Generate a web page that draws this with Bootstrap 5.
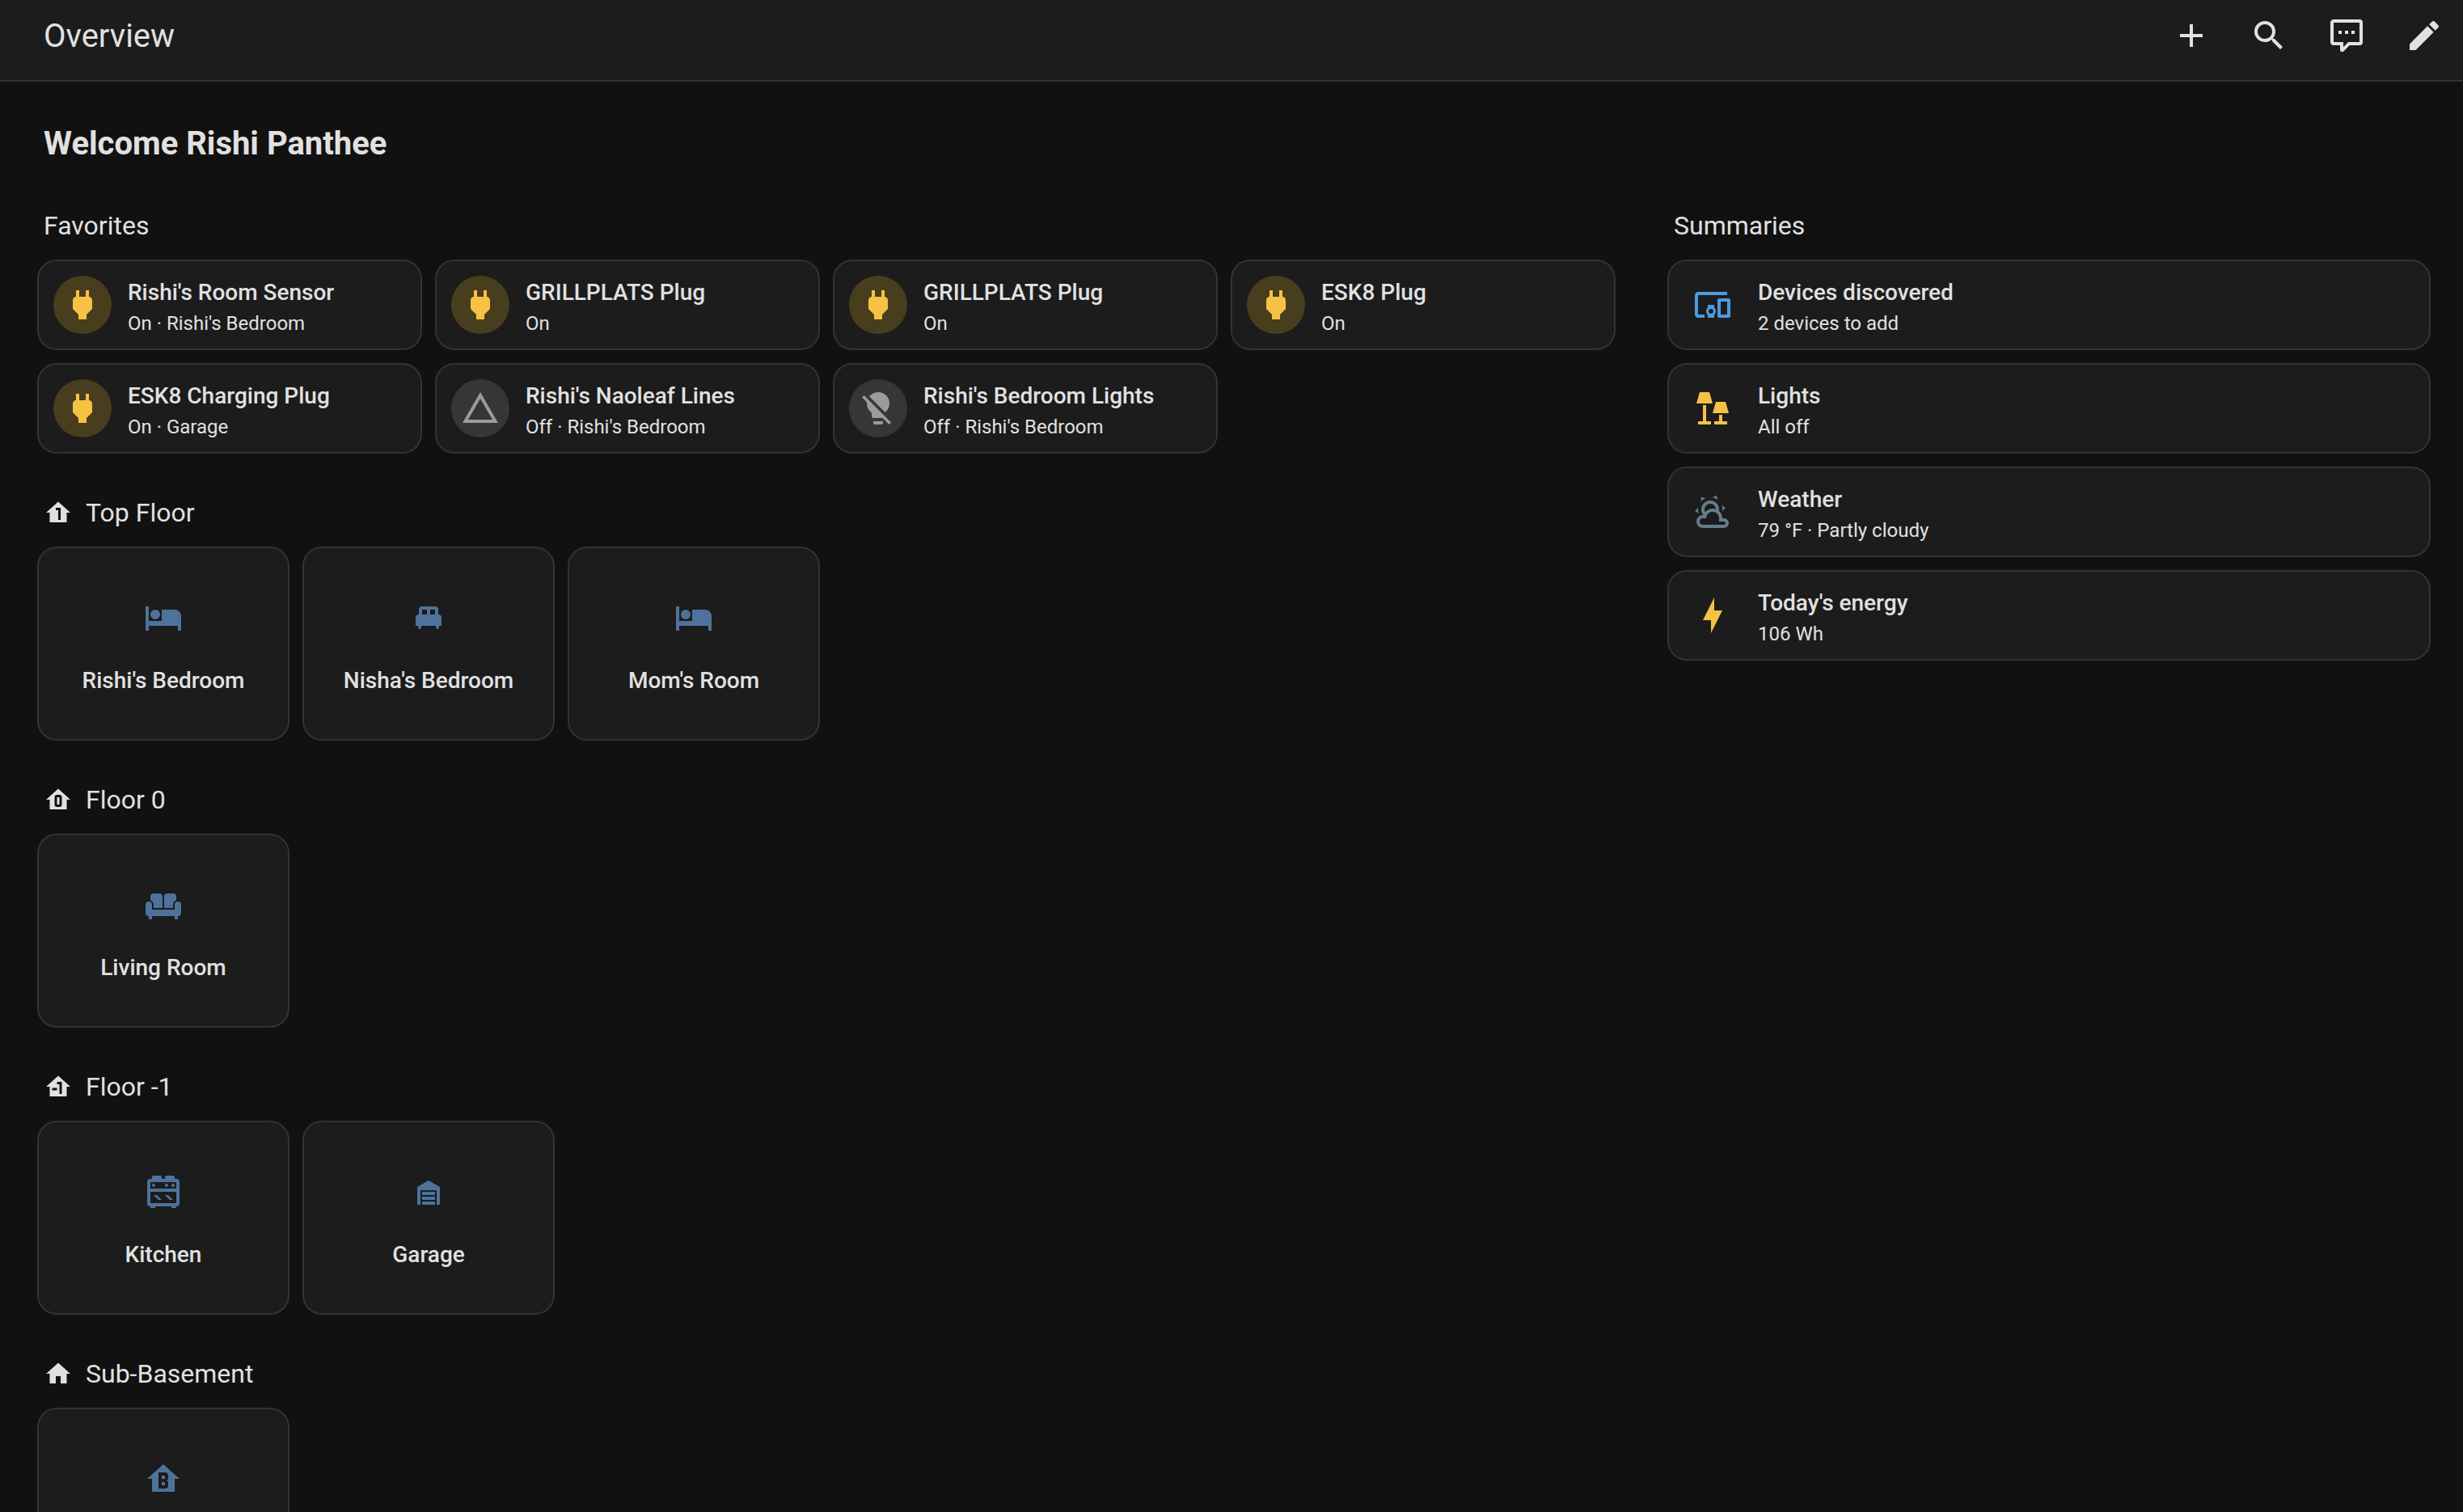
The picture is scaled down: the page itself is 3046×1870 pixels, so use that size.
<!DOCTYPE html>
<html lang="en" data-bs-theme="dark">
<head>
<meta charset="utf-8">
<meta name="viewport" content="width=device-width, initial-scale=1">
<title>Overview</title>
<link href="https://cdn.jsdelivr.net/npm/bootstrap@5.3.0/dist/css/bootstrap.min.css" rel="stylesheet">
<style>
  body { background: #111; color: #e1e1e1; font-family: Roboto, "Noto Sans", sans-serif; font-size: 28px; }
  h1, h2, h3 { color: #e1e1e1; }
  svg { fill: currentColor; fill-rule: evenodd; display: block; width: 48px; height: 48px; flex: none; }
  .topbar { background: #1c1c1c; border-bottom: 2px solid #333; padding: 0 0 11px 54px; }
  .topbar h1 { font-size: 40px; line-height: 48px; font-weight: 400; padding-top: 2px; }
  .tool-btn { width: 96px; height: 88px; color: #e1e1e1; border: 0; border-radius: 0; }
  .view { padding: 53px 40px 0 46px; }
  .welcome { font-size: 40px; line-height: 48px; font-weight: 700; padding: 0 8px; margin-bottom: 53px; }
  .sections { display: grid; grid-template-columns: repeat(3, minmax(0, 1fr)); gap: 64px; }
  .areas { grid-column: span 2; }
  .section-title { font-size: 32px; line-height: 48px; font-weight: 400; padding: 0 8px; margin: 0 0 18px; gap: 16px; }
  .section-title svg { width: 36px; height: 36px; }
  .floor { margin-top: 49px; }
  .fav-grid, .room-grid { display: grid; gap: 16px; }
  .fav-grid { grid-template-columns: repeat(4, minmax(0, 1fr)); }
  .room-grid { grid-template-columns: repeat(6, minmax(0, 1fr)); }
  .tile, .room { background: #1c1c1c; border: 2px solid #333; border-radius: 24px; color: #e1e1e1; }
  .tile { min-height: 112px; padding: 0 18px; gap: 20px; }
  .tile-icon { width: 72px; height: 72px; color: #f6c244; }
  .tile-icon.on { background: #483d1d; }
  .tile-icon.off { background: #363636; color: #9b9b9b; }
  .tile-text { padding-top: 6px; }
  .tile-name, .room-name { font-size: 28px; line-height: 40px; font-weight: 500; }
  .tile-state { font-size: 24px; line-height: 36px; }
  .room { height: 240px; padding: 50px 16px; gap: 22px; }
  .room-icon { width: 72px; height: 72px; color: #4e729c; }
  .tile-icon.blue { color: #4a9be2; }
  .tile-icon.slate { color: #657d8a; }
</style>
</head>
<body>
<svg class="d-none" aria-hidden="true">
  <symbol id="plug" viewBox="0 0 24 24"><path d="M16,7V3H14V7H10V3H8V7C7,7 6,8 6,9V14.5L9.5,18V21H14.5V18L18,14.5V9C18,8 17,7 16,7Z"/></symbol>
  <symbol id="bed" viewBox="0 0 24 24"><path d="M19,7H11V14H3V5H1V20H3V17H21V20H23V11A4,4 0 0,0 19,7M7,13A3,3 0 0,0 10,10A3,3 0 0,0 7,7A3,3 0 0,0 4,10A3,3 0 0,0 7,13Z"/></symbol>
</svg>
<div class="vh-100 d-flex flex-column overflow-hidden">
  <header class="topbar d-flex align-items-center">
    <h1 class="mb-0 me-auto">Overview</h1>
    <button type="button" class="btn tool-btn p-0 d-flex align-items-center justify-content-center" aria-label="Add"><svg viewBox="0 0 24 24"><path d="M19,13H13V19H11V13H5V11H11V5H13V11H19V13Z"/></svg></button>
    <button type="button" class="btn tool-btn p-0 d-flex align-items-center justify-content-center" aria-label="Search"><svg viewBox="0 0 24 24"><path d="M9.5,3A6.5,6.5 0 0,1 16,9.5C16,11.11 15.41,12.59 14.44,13.73L14.71,14H15.5L20.5,19L19,20.5L14,15.5V14.71L13.73,14.44C12.59,15.41 11.11,16 9.5,16A6.5,6.5 0 0,1 3,9.5A6.5,6.5 0 0,1 9.5,3M9.5,5C7,5 5,7 5,9.5C5,12 7,14 9.5,14C12,14 14,12 14,9.5C14,7 12,5 9.5,5Z"/></svg></button>
    <button type="button" class="btn tool-btn p-0 d-flex align-items-center justify-content-center" aria-label="Assist"><svg viewBox="0 0 24 24"><path d="M9,22A1,1 0 0,1 8,21V18H4A2,2 0 0,1 2,16V4C2,2.89 2.9,2 4,2H20A2,2 0 0,1 22,4V16A2,2 0 0,1 20,18H13.9L10.2,21.71C10,21.9 9.75,22 9.5,22H9M10,16V19.08L13.08,16H20V4H4V16H10M17,11H15V9H17V11M13,11H11V9H13V11M9,11H7V9H9V11Z"/></svg></button>
    <button type="button" class="btn tool-btn p-0 d-flex align-items-center justify-content-center" aria-label="Edit"><svg viewBox="0 0 24 24"><path d="M20.71,7.04C21.1,6.65 21.1,6 20.71,5.63L18.37,3.29C18,2.9 17.35,2.9 16.96,3.29L15.12,5.12L18.87,8.87M3,17.25V21H6.75L17.81,9.93L14.06,6.18L3,17.25Z"/></svg></button>
  </header>

  <main class="view flex-grow-1 overflow-hidden">
    <h2 class="welcome">Welcome Rishi Panthee</h2>
    <div class="sections">
      <div class="areas">
        <section>
          <h3 class="section-title">Favorites</h3>
          <div class="fav-grid">
            <button type="button" class="tile d-flex align-items-center text-start">
              <span class="tile-icon on rounded-circle d-flex align-items-center justify-content-center"><svg><use href="#plug"/></svg></span>
              <span class="tile-text d-flex flex-column"><span class="tile-name">Rishi's Room Sensor</span><span class="tile-state">On · Rishi's Bedroom</span></span>
            </button>
            <button type="button" class="tile d-flex align-items-center text-start">
              <span class="tile-icon on rounded-circle d-flex align-items-center justify-content-center"><svg><use href="#plug"/></svg></span>
              <span class="tile-text d-flex flex-column"><span class="tile-name">GRILLPLATS Plug</span><span class="tile-state">On</span></span>
            </button>
            <button type="button" class="tile d-flex align-items-center text-start">
              <span class="tile-icon on rounded-circle d-flex align-items-center justify-content-center"><svg><use href="#plug"/></svg></span>
              <span class="tile-text d-flex flex-column"><span class="tile-name">GRILLPLATS Plug</span><span class="tile-state">On</span></span>
            </button>
            <button type="button" class="tile d-flex align-items-center text-start">
              <span class="tile-icon on rounded-circle d-flex align-items-center justify-content-center"><svg><use href="#plug"/></svg></span>
              <span class="tile-text d-flex flex-column"><span class="tile-name">ESK8 Plug</span><span class="tile-state">On</span></span>
            </button>
            <button type="button" class="tile d-flex align-items-center text-start">
              <span class="tile-icon on rounded-circle d-flex align-items-center justify-content-center"><svg><use href="#plug"/></svg></span>
              <span class="tile-text d-flex flex-column"><span class="tile-name">ESK8 Charging Plug</span><span class="tile-state">On · Garage</span></span>
            </button>
            <button type="button" class="tile d-flex align-items-center text-start">
              <span class="tile-icon off rounded-circle d-flex align-items-center justify-content-center"><svg viewBox="0 0 24 24"><path d="M12,2L1,21H23M12,6L19.53,19H4.47"/></svg></span>
              <span class="tile-text d-flex flex-column"><span class="tile-name">Rishi's Naoleaf Lines</span><span class="tile-state">Off · Rishi's Bedroom</span></span>
            </button>
            <button type="button" class="tile d-flex align-items-center text-start">
              <span class="tile-icon off rounded-circle d-flex align-items-center justify-content-center"><svg viewBox="0 0 24 24"><path d="M12,2C9.76,2 7.78,3.05 6.5,4.68L16.31,14.5C17.94,13.21 19,11.24 19,9A7,7 0 0,0 12,2M3.28,4L2,5.27L5.04,8.3C5,8.53 5,8.76 5,9C5,11.38 6.19,13.47 8,14.74V17A1,1 0 0,0 9,18H14.73L18.73,22L20,20.72L3.28,4M9,20V21A1,1 0 0,0 10,22H14A1,1 0 0,0 15,21V20H9Z"/></svg></span>
              <span class="tile-text d-flex flex-column"><span class="tile-name">Rishi's Bedroom Lights</span><span class="tile-state">Off · Rishi's Bedroom</span></span>
            </button>
          </div>
        </section>

        <section class="floor">
          <h3 class="section-title d-flex align-items-center"><svg viewBox="0 0 24 24"><path d="M12,3L2,12H5V20H19V12H22L12,3M10,8H14V18H12V10H10V8Z"/></svg>Top Floor</h3>
          <div class="room-grid">
            <a href="#" class="room d-flex flex-column align-items-center text-decoration-none">
              <span class="room-icon d-flex align-items-center justify-content-center"><svg><use href="#bed"/></svg></span>
              <span class="room-name">Rishi's Bedroom</span>
            </a>
            <a href="#" class="room d-flex flex-column align-items-center text-decoration-none">
              <span class="room-icon d-flex align-items-center justify-content-center"><svg viewBox="0 0 24 24"><path d="M20 12A2 2 0 0 0 18 10V7A2 2 0 0 0 16 5H8A2 2 0 0 0 6 7V10A2 2 0 0 0 4 12V17H5.33L6 19H7L7.67 17H16.33L17 19H18L18.67 17H20M11 10H8V7H11M16 10H13V7H16Z"/></svg></span>
              <span class="room-name">Nisha's Bedroom</span>
            </a>
            <a href="#" class="room d-flex flex-column align-items-center text-decoration-none">
              <span class="room-icon d-flex align-items-center justify-content-center"><svg><use href="#bed"/></svg></span>
              <span class="room-name">Mom's Room</span>
            </a>
          </div>
        </section>

        <section class="floor">
          <h3 class="section-title d-flex align-items-center"><svg viewBox="0 0 24 24"><path d="M12,3L2,12H5V20H19V12H22L12,3M11,8H13A2,2 0 0,1 15,10V16A2,2 0 0,1 13,18H11A2,2 0 0,1 9,16V10A2,2 0 0,1 11,8M11,10V16H13V10H11Z"/></svg>Floor 0</h3>
          <div class="room-grid">
            <a href="#" class="room d-flex flex-column align-items-center text-decoration-none">
              <span class="room-icon d-flex align-items-center justify-content-center"><svg viewBox="0 0 24 24"><path d="M6 5H9.5A2 2 0 0 1 11.500 7V14H6V12A3 3 0 0 0 4 9.200V7A2 2 0 0 1 6 5ZM14.500 5H18A2 2 0 0 1 20 7V9.200A3 3 0 0 0 18 12V14H12.500V7A2 2 0 0 1 14.500 5ZM3 10A2 2 0 0 1 5 12V15H19V12A2 2 0 0 1 23 12V17A2 2 0 0 1 21 19V21H19V19H5V21H3V19A2 2 0 0 1 1 17V12A2 2 0 0 1 3 10Z"/></svg></span>
              <span class="room-name">Living Room</span>
            </a>
          </div>
        </section>

        <section class="floor">
          <h3 class="section-title d-flex align-items-center"><svg viewBox="0 0 24 24"><path d="M12,3L2,12H5V20H19V12H22L12,3M11,15H7V13H11V15M15,18H13V10H11V8H15V18Z"/></svg>Floor -1</h3>
          <div class="room-grid">
            <a href="#" class="room d-flex flex-column align-items-center text-decoration-none">
              <span class="room-icon d-flex align-items-center justify-content-center"><svg viewBox="0 0 24 24"><path d="M6,14H8L11,17H9L6,14M4,4H5V3A1,1 0 0,1 6,2H10A1,1 0 0,1 11,3V4H13V3A1,1 0 0,1 14,2H18A1,1 0 0,1 19,3V4H20A2,2 0 0,1 22,6V19A2,2 0 0,1 20,21V22H17V21H7V22H4V21A2,2 0 0,1 2,19V6A2,2 0 0,1 4,4M18,7A1,1 0 0,1 19,8A1,1 0 0,1 18,9A1,1 0 0,1 17,8A1,1 0 0,1 18,7M14,7A1,1 0 0,1 15,8A1,1 0 0,1 14,9A1,1 0 0,1 13,8A1,1 0 0,1 14,7M20,6H4V10H20V6M4,19H20V12H4V19M6,7A1,1 0 0,1 7,8A1,1 0 0,1 6,9A1,1 0 0,1 5,8A1,1 0 0,1 6,7M13,14H15L18,17H16L13,14Z"/></svg></span>
              <span class="room-name">Kitchen</span>
            </a>
            <a href="#" class="room d-flex flex-column align-items-center text-decoration-none">
              <span class="room-icon d-flex align-items-center justify-content-center"><svg viewBox="0 0 24 24"><path d="M19,20H17V11H7V20H5V9L12,5L19,9V20M8,12H16V14H8V12M8,15H16V17H8V15M16,18V20H8V18H16Z"/></svg></span>
              <span class="room-name">Garage</span>
            </a>
          </div>
        </section>

        <section class="floor">
          <h3 class="section-title d-flex align-items-center"><svg viewBox="0 0 24 24"><path d="M10,20V14H14V20H19V12H22L12,3L2,12H5V20H10Z"/></svg>Sub-Basement</h3>
          <div class="room-grid">
            <a href="#" class="room d-flex flex-column align-items-center text-decoration-none">
              <span class="room-icon d-flex align-items-center justify-content-center"><svg viewBox="0 0 24 24"><path d="M12,3L2,12H5V20H19V12H22L12,3M9,8H13A2,2 0 0,1 15,10V11.5A1.5,1.5 0 0,1 13.5,13A1.5,1.5 0 0,1 15,14.5V16A2,2 0 0,1 13,18H9V8M11,10V12H13V10H11M11,14V16H13V14H11Z"/></svg></span>
            </a>
          </div>
        </section>
      </div>

      <section>
        <h3 class="section-title">Summaries</h3>
        <div class="d-grid gap-3">
          <button type="button" class="tile d-flex align-items-center text-start">
            <span class="tile-icon blue d-flex align-items-center justify-content-center"><svg viewBox="0 0 24 24"><path d="M3 6h18V4H3c-1.100 0-2 .9-2 2v12c0 1.100.9 2 2 2h4v-2H3V6zm10 6H9v1.780c-.61.55-1 1.330-1 2.220s.39 1.670 1 2.220V20h4v-1.780c.61-.55 1-1.340 1-2.220s-.39-1.670-1-2.220V12zm-2 5.500c-.83 0-1.500-.67-1.500-1.500s.67-1.500 1.500-1.500 1.500.67 1.500 1.500-.67 1.500-1.500 1.500zM22 8h-6c-.5 0-1 .5-1 1v10c0 .5.5 1 1 1h6c.5 0 1-.5 1-1V9c0-.5-.5-1-1-1zm-1 10h-4v-8h4v8z"/></svg></span>
            <span class="tile-text d-flex flex-column"><span class="tile-name">Devices discovered</span><span class="tile-state">2 devices to add</span></span>
          </button>
          <button type="button" class="tile d-flex align-items-center text-start">
            <span class="tile-icon d-flex align-items-center justify-content-center"><svg viewBox="0 0 24 24"><path d="M4 2H10L12 9H2ZM6 10H8V20H11V22H3V20H6ZM14 8H20L22 15H12ZM16 16H18V20H21V22H13V20H16Z"/></svg></span>
            <span class="tile-text d-flex flex-column"><span class="tile-name">Lights</span><span class="tile-state">All off</span></span>
          </button>
          <button type="button" class="tile d-flex align-items-center text-start">
            <span class="tile-icon slate d-flex align-items-center justify-content-center"><svg viewBox="0 0 24 24"><path d="M12.74,5.47C15.1,6.5 16.35,9.03 15.92,11.46C17.19,12.56 18,14.19 18,16V16.17C18.31,16.06 18.65,16 19,16A3,3 0 0,1 22,19A3,3 0 0,1 19,22H6A4,4 0 0,1 2,18A4,4 0 0,1 6,14H6.27C5,12.45 4.6,10.24 5.5,8.26C6.72,5.5 9.97,4.24 12.74,5.47M11.93,7.3C10.16,6.5 8.09,7.31 7.31,9.07C6.85,10.09 6.93,11.22 7.41,12.13C8.5,10.83 10.16,10 12,10C12.7,10 13.38,10.12 14,10.34C13.94,9.06 13.18,7.86 11.93,7.3M13.55,3.64C13,3.4 12.45,3.23 11.88,3.12L14.37,1.82L15.27,4.71C14.76,4.29 14.19,3.93 13.55,3.64M6.09,4.44C5.6,4.79 5.17,5.19 4.8,5.63L4.91,2.82L7.87,3.5C7.25,3.71 6.65,4.03 6.09,4.44M18,9.71C17.91,9.12 17.78,8.55 17.59,8L19.97,9.5L17.92,11.73C18.03,11.08 18.05,10.4 18,9.71M3.04,11.3C3.11,11.9 3.24,12.47 3.43,13L1.06,11.5L3.1,9.28C3,9.93 2.97,10.61 3.04,11.3M19,18H16V16A4,4 0 0,0 12,12A4,4 0 0,0 8,16H6A2,2 0 0,0 4,18A2,2 0 0,0 6,20H19A1,1 0 0,0 20,19A1,1 0 0,0 19,18Z"/></svg></span>
            <span class="tile-text d-flex flex-column"><span class="tile-name">Weather</span><span class="tile-state">79 °F · Partly cloudy</span></span>
          </button>
          <button type="button" class="tile d-flex align-items-center text-start">
            <span class="tile-icon d-flex align-items-center justify-content-center"><svg viewBox="0 0 24 24"><path d="M11 15H6L13 1V9H18L11 23V15Z"/></svg></span>
            <span class="tile-text d-flex flex-column"><span class="tile-name">Today's energy</span><span class="tile-state">106 Wh</span></span>
          </button>
        </div>
      </section>
    </div>
  </main>
</div>
<script src="https://cdn.jsdelivr.net/npm/bootstrap@5.3.0/dist/js/bootstrap.bundle.min.js"></script>
</body>
</html>
